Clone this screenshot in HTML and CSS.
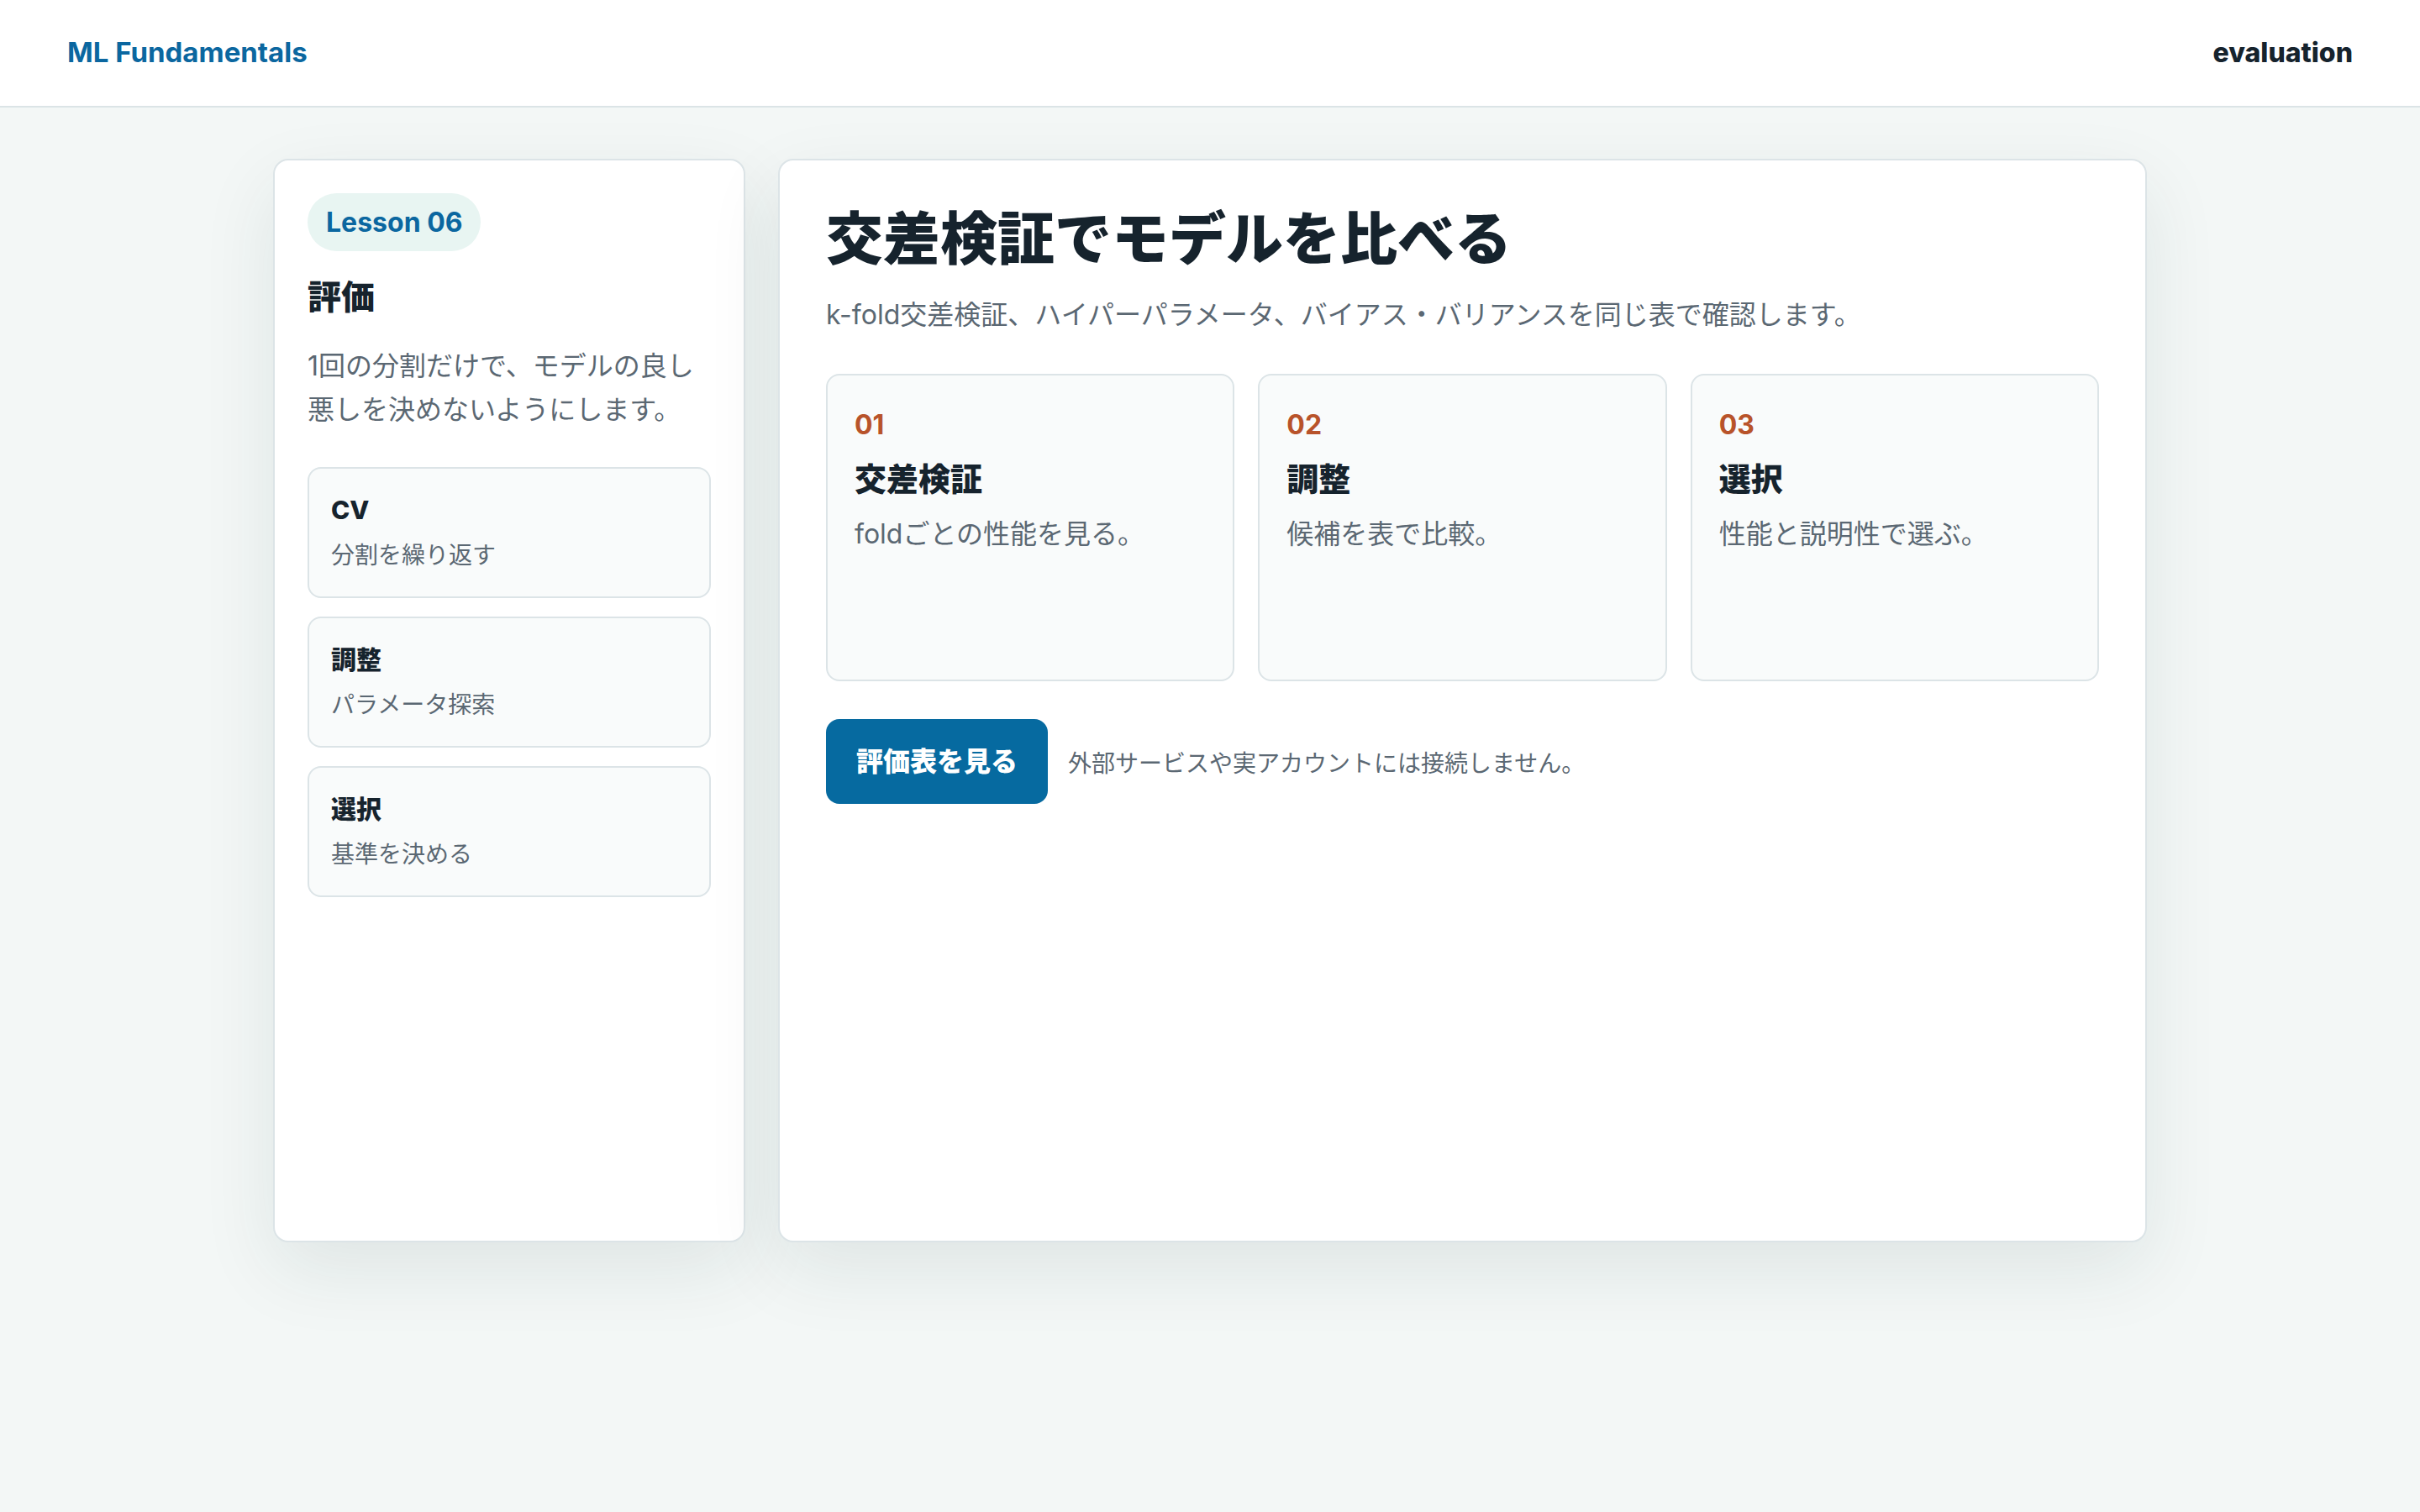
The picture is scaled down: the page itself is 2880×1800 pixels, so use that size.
FILE: index.html
```html
<!DOCTYPE html>
<html lang="ja">
<head>
  <meta charset="utf-8">
  <title>ML Fundamentals - evaluation</title>
  <link rel="stylesheet" href="styles.css">
</head>
<body>
  <header class="topbar">
    <div class="brand">ML Fundamentals</div>
    <div class="section-name">evaluation</div>
  </header>

  <main class="layout">
    <aside class="side-panel">
      <span class="lesson-badge">Lesson 06</span>
      <h2 class="side-title">評価</h2>
      <p class="side-text">1回の分割だけで、モデルの良し悪しを決めないようにします。</p>

      <div class="side-list">
        <div class="side-item">
          <div class="side-item-title">CV</div>
          <div class="side-item-text">分割を繰り返す</div>
        </div>
        <div class="side-item">
          <div class="side-item-title">調整</div>
          <div class="side-item-text">パラメータ探索</div>
        </div>
        <div class="side-item">
          <div class="side-item-title">選択</div>
          <div class="side-item-text">基準を決める</div>
        </div>
      </div>
    </aside>

    <section class="main-panel">
      <h1 class="page-title">交差検証でモデルを比べる</h1>
      <p class="page-lead">k-fold交差検証、ハイパーパラメータ、バイアス・バリアンスを同じ表で確認します。</p>

      <div class="steps">
        <div class="step">
          <div class="step-num">01</div>
          <h3 class="step-title">交差検証</h3>
          <p class="step-text">foldごとの性能を見る。</p>
        </div>
        <div class="step">
          <div class="step-num">02</div>
          <h3 class="step-title">調整</h3>
          <p class="step-text">候補を表で比較。</p>
        </div>
        <div class="step">
          <div class="step-num">03</div>
          <h3 class="step-title">選択</h3>
          <p class="step-text">性能と説明性で選ぶ。</p>
        </div>
      </div>

      <div class="actions">
        <button class="primary-button">評価表を見る</button>
        <span class="note">外部サービスや実アカウントには接続しません。</span>
      </div>
    </section>
  </main>
</body>
</html>
```

FILE: styles.css
```css
* {
  box-sizing: border-box;
}

body {
  margin: 0;
  min-height: 1800px;
  background: #f3f7f6;
  color: #16232d;
  font-family: "Inter", "Noto Sans CJK JP", sans-serif;
}

h1, h2, h3, p {
  margin: 0;
}

/* Top bar */
.topbar {
  display: flex;
  align-items: center;
  justify-content: space-between;
  height: 128px;
  padding: 0 80px 2px;
  background: #fff;
  border-bottom: 2px solid #dbe4e6;
}

.brand {
  font-size: 33px;
  font-weight: 700;
  color: #0b67a0;
}

.section-name {
  font-size: 32px;
  font-weight: 800;
  color: #16232d;
}

/* Two column layout */
.layout {
  display: grid;
  grid-template-columns: 562px 1fr;
  gap: 39px;
  width: 2230px;
  min-height: 1290px;
  margin: 61px auto 0;
}

.side-panel,
.main-panel {
  background: #fff;
  border: 2px solid #dce4e7;
  border-radius: 18px;
  box-shadow: 0 32px 90px rgba(25, 50, 55, 0.09);
}

.side-panel {
  padding: 39px 39px;
}

.lesson-badge {
  display: inline-block;
  padding: 10px 22px;
  line-height: 49px;
  font-size: 32px;
  font-weight: 700;
  color: #0b67a0;
  background: #e8f5f2;
  border-radius: 999px;
}

.side-title {
  margin-top: 29px;
  font-size: 40px;
  line-height: 52px;
  font-weight: 900;
}

.side-text {
  margin-top: 30px;
  font-size: 32px;
  line-height: 52px;
  color: #5b6873;
}

.side-list {
  display: flex;
  flex-direction: column;
  gap: 22px;
  margin-top: 42px;
}

.side-item {
  padding: 28px 26px;
  background: #f9fbfb;
  border: 2px solid #dce4e7;
  border-radius: 16px;
}

.side-item-title {
  font-size: 30px;
  line-height: 42px;
  font-weight: 800;
}

.side-item-text {
  margin-top: 12px;
  font-size: 28px;
  line-height: 42px;
  color: #5b6873;
}

/* Main panel */
.main-panel {
  padding: 53px 55px 52px;
}

.page-title {
  font-size: 68px;
  line-height: 80px;
  font-weight: 900;
}

.page-lead {
  margin-top: 27px;
  font-size: 32px;
  line-height: 48px;
  color: #5b6873;
}

.steps {
  display: grid;
  grid-template-columns: repeat(3, 1fr);
  gap: 28px;
  margin-top: 46px;
}

.step {
  min-height: 366px;
  padding: 35px 32px;
  background: #f9fbfb;
  border: 2px solid #dce4e7;
  border-radius: 16px;
}

.step-num {
  font-size: 32px;
  line-height: 48px;
  font-weight: 700;
  color: #b8532a;
}

.step-title {
  margin-top: 14px;
  font-size: 38px;
  line-height: 53px;
  font-weight: 900;
}

.step-text {
  margin-top: 15px;
  font-size: 32px;
  line-height: 48px;
  color: #5b6873;
}

.actions {
  display: flex;
  align-items: center;
  gap: 24px;
  margin-top: 45px;
}

.primary-button {
  padding: 26px 36px;
  line-height: 49px;
  font-family: inherit;
  font-size: 32px;
  font-weight: 900;
  color: #fff;
  background: #066aa0;
  border: none;
  border-radius: 16px;
  cursor: pointer;
}

.note {
  font-size: 28px;
  color: #5b6873;
}
```
